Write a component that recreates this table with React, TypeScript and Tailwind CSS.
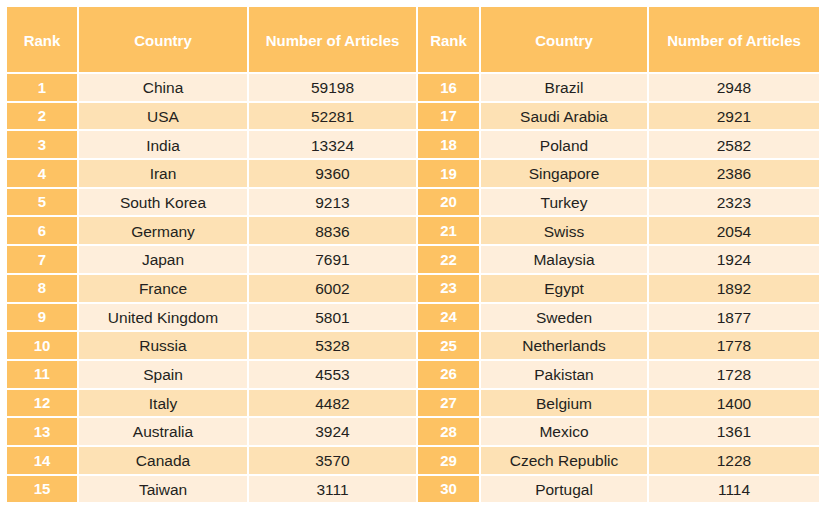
const left: [number, string, number][] = [
  [1, "China", 59198],
  [2, "USA", 52281],
  [3, "India", 13324],
  [4, "Iran", 9360],
  [5, "South Korea", 9213],
  [6, "Germany", 8836],
  [7, "Japan", 7691],
  [8, "France", 6002],
  [9, "United Kingdom", 5801],
  [10, "Russia", 5328],
  [11, "Spain", 4553],
  [12, "Italy", 4482],
  [13, "Australia", 3924],
  [14, "Canada", 3570],
  [15, "Taiwan", 3111],
];

const right: [number, string, number][] = [
  [16, "Brazil", 2948],
  [17, "Saudi Arabia", 2921],
  [18, "Poland", 2582],
  [19, "Singapore", 2386],
  [20, "Turkey", 2323],
  [21, "Swiss", 2054],
  [22, "Malaysia", 1924],
  [23, "Egypt", 1892],
  [24, "Sweden", 1877],
  [25, "Netherlands", 1778],
  [26, "Pakistan", 1728],
  [27, "Belgium", 1400],
  [28, "Mexico", 1361],
  [29, "Czech Republic", 1228],
  [30, "Portugal", 1114],
];

const headers = ["Rank", "Country", "Number of Articles", "Rank", "Country", "Number of Articles"];

export default function App() {
  return (
    <div
      className="w-[827px] h-[508px] bg-white p-[7px]"
      style={{ fontFamily: '"Liberation Sans", Arial, sans-serif' }}
    >
      <div className="grid grid-cols-[70px_168px_167px_61px_166px_170px] grid-rows-[65px_repeat(15,26.7px)] gap-[2px]">
        {headers.map((h, i) => (
          <div
            key={i}
            className="flex items-center justify-center bg-[#fdc263] pt-[3px] text-[15px] font-bold text-white"
          >
            {h}
          </div>
        ))}
        {left.map((row, i) => {
          const r = right[i];
          const bg = i % 2 === 0 ? "bg-[#feeedb]" : "bg-[#fde1b4]";
          return [row, r].map(([rank, country, count], j) => (
            <div key={`${i}-${j}`} className="contents">
              <div className="flex items-center justify-center bg-[#fdc263] pt-[1px] text-[15px] font-bold text-white">
                {rank}
              </div>
              <div className={`flex items-center justify-center ${bg} pt-[1px] text-[15.5px] text-[#231f20]`}>
                {country}
              </div>
              <div className={`flex items-center justify-center ${bg} pt-[1px] text-[15.5px] text-[#231f20]`}>
                {count}
              </div>
            </div>
          ));
        })}
      </div>
    </div>
  );
}
